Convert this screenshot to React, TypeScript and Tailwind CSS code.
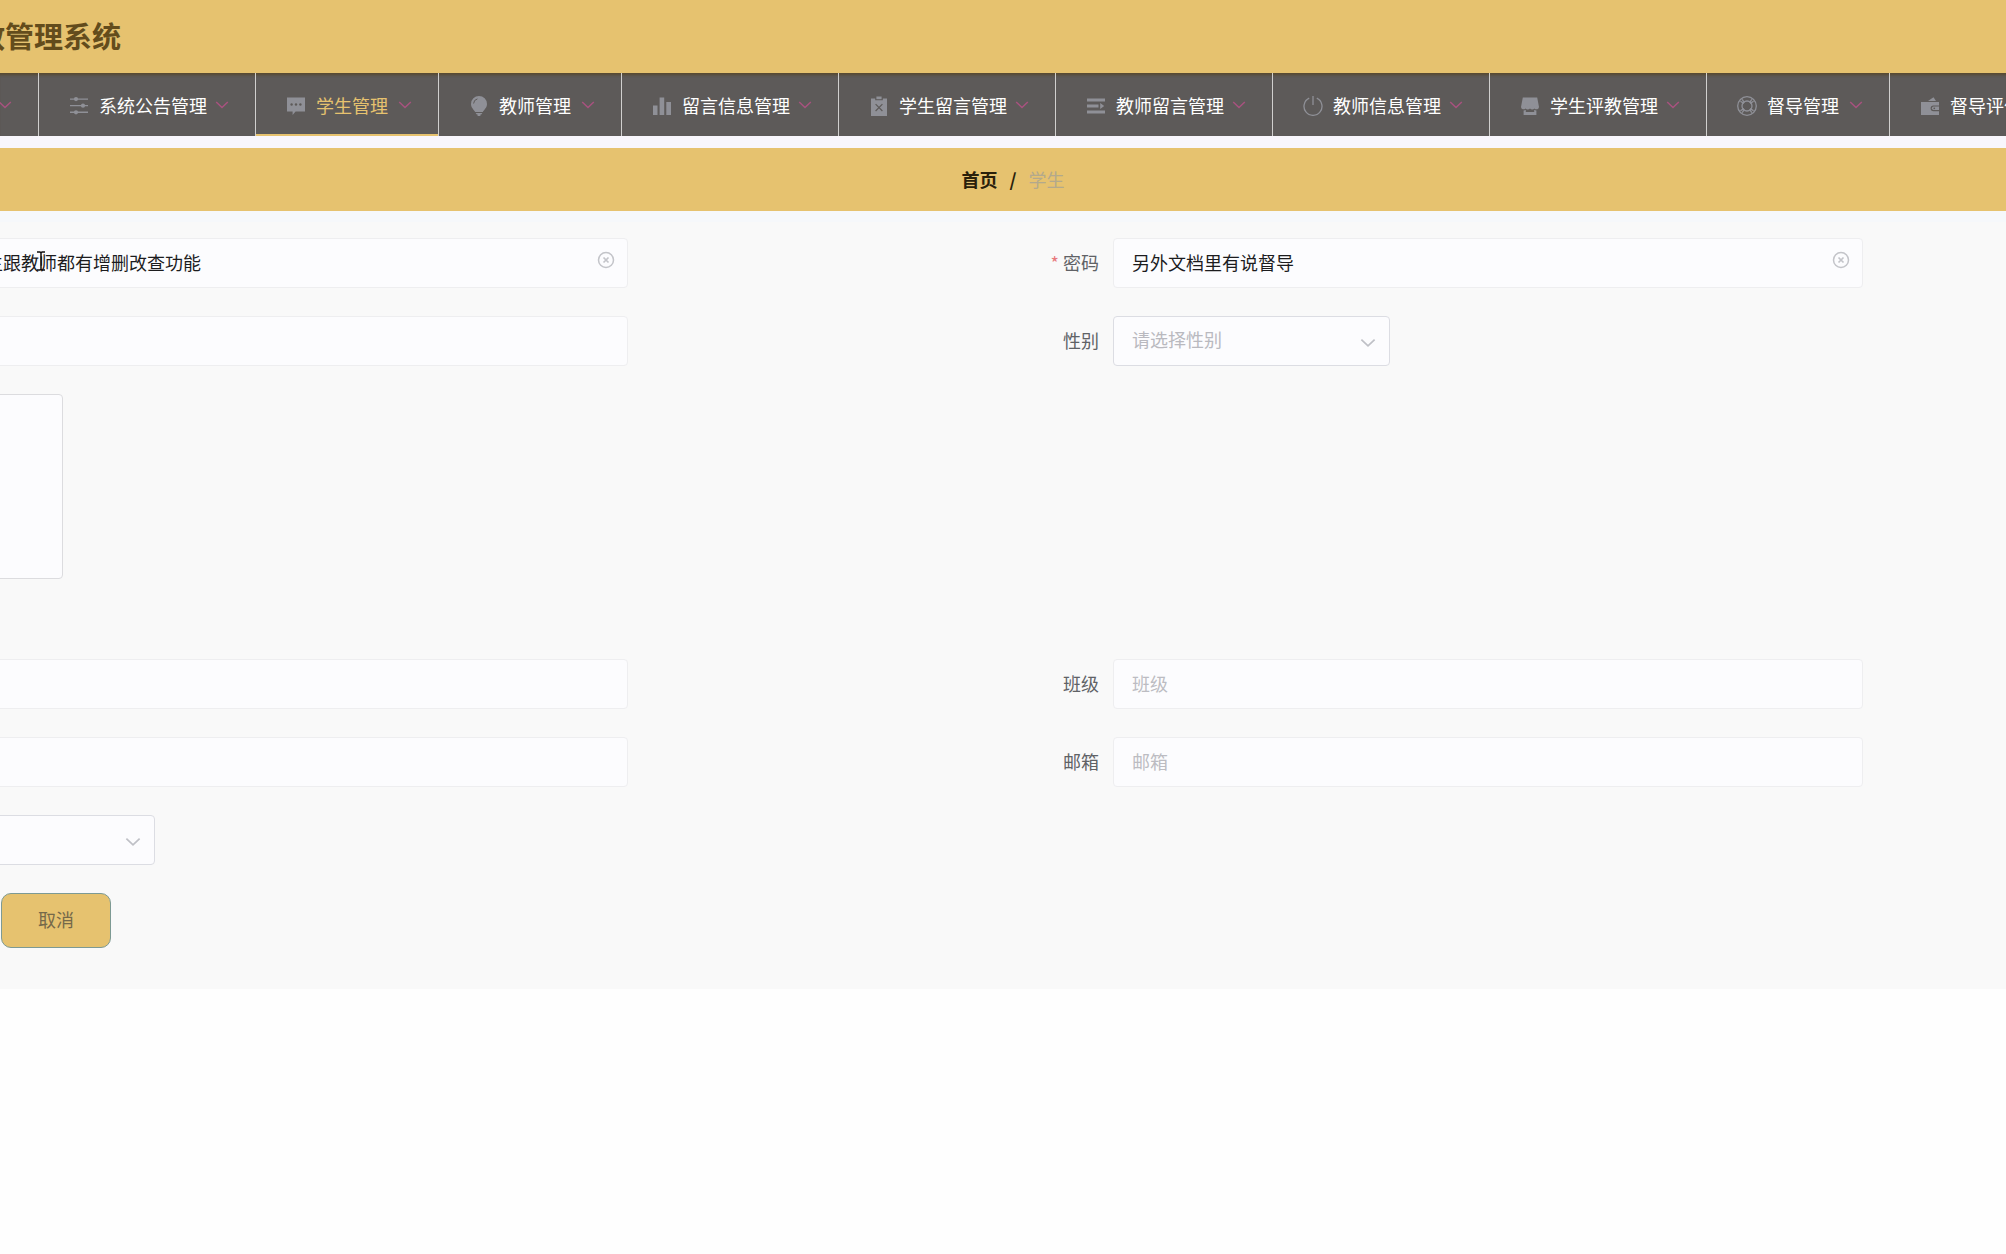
import React from 'react';

const operation = (
  <svg viewBox="0 0 20 20" className="h-5 w-5" fill="currentColor">
    <path d="M1 2.400h18v1.300H1zM1 9h18v1.300H1zM1 15.600h18v1.300H1z" />
    <circle cx="7" cy="3.1" r="2.100" />
    <circle cx="14" cy="9.7" r="2.100" />
    <circle cx="7" cy="16.3" r="2.100" />
  </svg>
);

const comment = (
  <svg viewBox="0 0 20 20" className="h-5 w-5" fill="currentColor">
    <path d="M1 1.5h18v14H9.6L6.6 19v-3.5H1z" />
    <g className="fill-[#5d5a59]">
      <circle cx="5.6" cy="8.5" r="1.2" />
      <circle cx="10" cy="8.5" r="1.2" />
      <circle cx="14.4" cy="8.5" r="1.2" />
    </g>
  </svg>
);

const bulb = (
  <svg viewBox="0 0 20 20" className="h-5 w-5" fill="currentColor">
    <path d="M10 0a8 8 0 0 0-8 8c0 3.600 2.600 5.400 4.200 8h7.600C15.400 13.400 18 11.600 18 8a8 8 0 0 0-8-8zM6.600 17h6.800l-1.200 1.500h-.8V20H8.600v-1.500h-.8z" />
    <path d="M4.600 7.500A5 5 0 0 1 8.400 2.900" fill="none" className="stroke-[#5d5a59]" strokeWidth="1" />
  </svg>
);

const dataBars = (
  <svg viewBox="0 0 20 20" className="h-5 w-5" fill="currentColor">
    <path d="M1 9.500h4.500V19H1zM7.600 1.500h4.600V19H7.600zM14.300 6H19v13h-4.700z" />
  </svg>
);

const release = (
  <svg viewBox="0 0 20 20" className="h-5 w-5" fill="currentColor">
    <path d="M2 2.500h4.200v1.800h7.600V2.500H18V20H2z" />
    <path d="M7.400.5h5.200v2.700H7.400z" />
    <path d="M6.600 8.200l6.800 6.800M13.400 8.200L6.600 15" fill="none" className="stroke-[#5d5a59]" strokeWidth="1.200" />
  </svg>
);

const unfold = (
  <svg viewBox="0 0 20 20" className="h-5 w-5" fill="currentColor">
    <path d="M1 2.500h18v3H1zM1 8.600h11.500v2.800H1zM1 14.500h18v3H1zM14.200 7v6l4-3z" />
  </svg>
);

const power = (
  <svg viewBox="0 0 20 20" className="h-5 w-5" fill="none" stroke="currentColor" strokeWidth="1.300">
    <path d="M6.200 2.200a9 9 0 1 0 7.600 0M10 0v9" />
  </svg>
);

const shop = (
  <svg viewBox="0 0 20 20" className="h-5 w-5" fill="currentColor">
    <path d="M2.800 1.500h14.400L19 11a2.600 2.600 0 0 1-4.500 1.500 3 3 0 0 1-4.500 0 3 3 0 0 1-4.500 0A2.600 2.600 0 0 1 1 11z" />
    <path d="M3.600 14.400c1 0 1.600-.2 2.200-.6V16h8.400v-2.200c.6.400 1.200.6 2.200.6V19H3.600z" />
  </svg>
);

const help = (
  <svg viewBox="0 0 20 20" className="h-5 w-5" fill="none" stroke="currentColor" strokeWidth="1.300">
    <circle cx="10" cy="10" r="9.300" />
    <circle cx="10" cy="10" r="5" />
    <path d="M3.400 5.200l3.400 2.200M5.200 3.400l2.200 3.200M14.800 3.400l-2.200 3.200M16.600 5.200l-3.400 2.200M3.400 14.800l3.400-2.200M5.200 16.600l2.200-3.200M14.800 16.600l-2.200-3.200M16.600 14.800l-3.400-2.200" />
  </svg>
);

const wallet = (
  <svg viewBox="0 0 20 20" className="h-5 w-5" fill="currentColor">
    <path d="M1 6h18v3.400h-5.500a2.900 2.900 0 0 0 0 5.800H19V19H1z" />
    <path d="M8 5l5.500-3.800L16 5z" />
    <path d="M13.600 10.600H19V14h-5.400a1.700 1.700 0 0 1 0-3.400z" />
    <circle cx="14.300" cy="12.300" r=".9" className="fill-[#5d5a59]" />
  </svg>
);

const menus = [
  { label: '系统公告管理', icon: operation, width: 'w-[217px]' },
  { label: '学生管理', icon: comment, width: 'w-[183px]', active: true },
  { label: '教师管理', icon: bulb, width: 'w-[183px]' },
  { label: '留言信息管理', icon: dataBars, width: 'w-[217px]' },
  { label: '学生留言管理', icon: release, width: 'w-[217px]' },
  { label: '教师留言管理', icon: unfold, width: 'w-[217px]' },
  { label: '教师信息管理', icon: power, width: 'w-[217px]' },
  { label: '学生评教管理', icon: shop, width: 'w-[217px]' },
  { label: '督导管理', icon: help, width: 'w-[183px]' },
  { label: '督导评价管理', icon: wallet, width: 'w-[217px]' },
];

const Chevron: React.FC<{ className: string }> = ({ className }) => (
  <svg viewBox="0 0 14 14" className={className} fill="none" stroke="currentColor" strokeWidth="1.500">
    <path d="M1.200 4l5.800 5.500 5.800-5.500" />
  </svg>
);

const ClearButton: React.FC = () => (
  <button type="button" aria-label="清空" className="absolute right-3 top-3 flex h-5 w-5 items-center justify-center text-[#c3c4c9]">
    <svg viewBox="0 0 18 18" className="h-[18px] w-[18px]" fill="none" stroke="currentColor" strokeWidth="1.500">
      <circle cx="9" cy="9" r="7.500" />
      <path d="M6.500 6.500l5 5M11.500 6.500l-5 5" strokeWidth="1.700" />
    </svg>
  </button>
);

const inputClass =
  'block h-[50px] w-full rounded border border-[#eeeef0] bg-[#fcfcfe] px-[18px] pb-[3px] text-[18px] text-[#1c1c1e] placeholder:text-[#bcbcc2] outline-none';
const selectClass =
  'block h-[50px] w-full appearance-none rounded border border-[#dcdde3] bg-[#fcfcfe] pl-[18px] pb-1 text-[18px] text-[#b9b9bf] outline-none';
const labelClass = 'flex h-[50px] items-center justify-end pr-[14px] pb-[2px] text-[18px] text-[#606266]';
const rowClass = 'grid grid-cols-[628fr_485fr_750fr_143fr]';

export default function App() {
  return (
    <div className="min-h-screen overflow-hidden bg-[#fefefe] font-['Noto_Sans_CJK_SC',sans-serif]">
      <header className="flex h-[73px] items-center bg-[#e6c26f] pb-[3px]">
        <h1 className="flex w-[121px] justify-end whitespace-nowrap text-[29px] leading-none font-bold text-[#634c1c]">教管理系统</h1>
      </header>

      <nav className="h-[63px] overflow-hidden bg-[#5d5a59] shadow-[inset_0_4px_3px_-2px_#57492f]">
        <ul className="flex">
          <li className="flex h-[63px] w-[39px] flex-none items-center border-r border-[#d0cfce]">
            <button type="button" aria-label="展开" className="-ml-[2px] text-[#a8527f]">
              <Chevron className="h-[14px] w-[14px]" />
            </button>
          </li>
          {menus.map((menu) => (
            <li key={menu.label} className={`${menu.width} h-[63px] flex-none border-r border-[#d0cfce]`}>
              <a
                href="#"
                className={`flex h-full items-center border-b-2 pt-1 pr-[26px] pl-[30px] ${
                  menu.active ? 'border-[#e6c26f] text-[#e6c26f]' : 'border-transparent text-white'
                }`}
              >
                <span className="text-[#8f9097]">{menu.icon}</span>
                <span className="ml-[10px] whitespace-nowrap text-[18px]">{menu.label}</span>
                <Chevron className="mb-[2px] ml-auto h-[14px] w-[14px] flex-none text-[#a8527f]" />
              </a>
            </li>
          ))}
        </ul>
      </nav>

      <div className="h-3 bg-[#f8f6fc]" />
      <div className="flex h-[63px] items-center justify-center gap-3 bg-[#e6c26f] pl-5 text-[18px]">
        <a href="#" className="font-bold text-[#2a200b]">首页</a>
        <span className="font-bold text-[#2a200b]">/</span>
        <span className="text-[#b3a98c]">学生</span>
      </div>

      <form className="flex flex-col gap-7 border-t-[11px] border-[#f6f8fb] bg-[#f9f9f9] pt-4 pb-[41px]">
        <div className={rowClass}>
          <div className="relative -ml-[34px]">
            <input type="text" aria-label="账号" defaultValue="生跟教师都有增删改查功能" className={inputClass} />
            <ClearButton />
            <svg viewBox="0 0 10 20" className="absolute top-[13px] left-[70px] h-5 w-[10px]" fill="none" stroke="#111" strokeWidth="1.500">
              <path d="M1 1h3l1 1 1-1h3M5 2v16M1 19h3l1-1 1 1h3" />
            </svg>
          </div>
          <label htmlFor="password" className={labelClass}>
            <span className="mr-1 text-[#e8787c]">*</span>密码
          </label>
          <div className="relative">
            <input id="password" type="text" defaultValue="另外文档里有说督导" className={inputClass} />
            <ClearButton />
          </div>
        </div>

        <div className={rowClass}>
          <div className="-ml-[34px]">
            <input type="text" aria-label="姓名" className={inputClass} />
          </div>
          <label htmlFor="gender" className={labelClass}>性别</label>
          <div className="relative w-[277px]">
            <select id="gender" className={selectClass}>
              <option>请选择性别</option>
            </select>
            <Chevron className="pointer-events-none absolute top-[19px] right-[14px] h-4 w-4 text-[#bfc0c6]" />
          </div>
        </div>

        <div className="h-[237px]">
          <button type="button" aria-label="上传" className="-ml-2 block h-[185px] w-[71px] rounded border border-[#dcdcdf] bg-[#fcfcfe]" />
        </div>

        <div className={rowClass}>
          <div className="-ml-[34px]">
            <input type="text" aria-label="专业" className={inputClass} />
          </div>
          <label htmlFor="grade" className={labelClass}>班级</label>
          <input id="grade" type="text" placeholder="班级" className={inputClass} />
        </div>

        <div className={rowClass}>
          <div className="-ml-[34px]">
            <input type="text" aria-label="手机" className={inputClass} />
          </div>
          <label htmlFor="email" className={labelClass}>邮箱</label>
          <input id="email" type="text" placeholder="邮箱" className={inputClass} />
        </div>

        <div className="relative -ml-[34px] w-[189px]">
          <select aria-label="状态" className={selectClass} />
          <Chevron className="pointer-events-none absolute top-[19px] right-[14px] h-4 w-4 text-[#bfc0c6]" />
        </div>

        <button type="button" className="ml-px h-[55px] w-[110px] rounded-[10px] border border-[#7d9a94] bg-[#e6c26f] pb-[3px] text-[18px] text-[#75694a]">
          取消
        </button>
      </form>
    </div>
  );
}
